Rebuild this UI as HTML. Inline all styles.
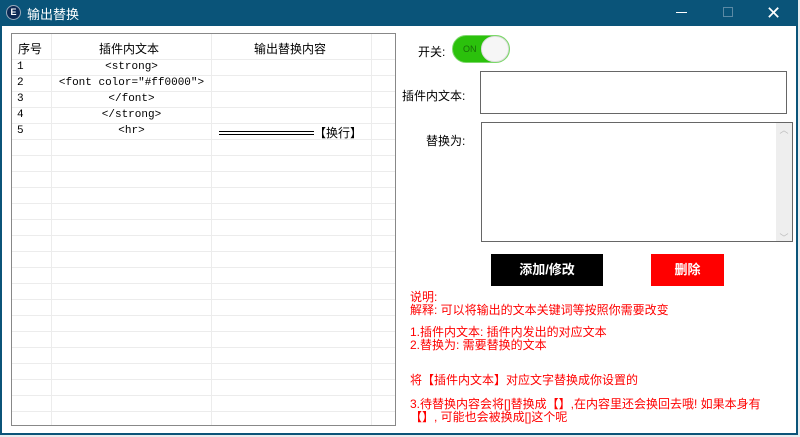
<!DOCTYPE html>
<html><head><meta charset="utf-8"><style>
*{margin:0;padding:0;box-sizing:border-box}
body{width:800px;height:437px;background:#e8ecef;position:relative;overflow:hidden;font-family:"Liberation Sans","Noto Sans CJK SC",sans-serif;font-size:12px}
.win{position:absolute;left:0;top:0;width:798px;height:435px;background:#fff}
.title{position:absolute;left:0;top:0;width:798px;height:26px;background:#0a5479;color:#fff}
.a{position:absolute;white-space:nowrap}
.tbl{position:absolute;left:11px;top:33px;width:385px;height:393px;border:1px solid #888;overflow:hidden}
.hl{position:absolute;left:0;width:383px;height:1px;background:#ececec}
.vl{position:absolute;top:0;width:1px;height:392px;background:#ececec}
.c{position:absolute;text-align:center;font-family:"Liberation Mono","Noto Sans CJK SC",monospace;font-size:11px}
.red{color:#f00;font-size:12px;line-height:13px}
</style></head><body>
<div class="win">
<div class="a" style="left:0;top:0;width:2px;height:435px;background:#0b5479"></div>
<div class="a" style="left:796px;top:0;width:2px;height:435px;background:#0b5479"></div>
<div class="a" style="left:0;top:433px;width:798px;height:2px;background:#0b5479"></div>
<div class="title">
<div class="a" style="left:6px;top:5px;width:15px;height:15px;border-radius:50%;background:#0c2a55;border:1px solid #9ab;color:#fff;font-size:9px;text-align:center;line-height:13px;font-weight:bold">E</div>
<div class="a" style="left:27px;top:4px;font-size:13px">输出替换</div>
<div class="a" style="left:676px;top:12px;width:11px;height:1px;background:#fff"></div>
<div class="a" style="left:723px;top:7px;width:10px;height:10px;border:1px solid #5b8aa5"></div>
<div class="a" style="left:766px;top:0px;font-size:18px;line-height:26px">✕</div>
</div>
<div class="tbl">
<div class="vl" style="left:39px"></div><div class="vl" style="left:199px"></div><div class="vl" style="left:359px"></div>
<div id="rows"></div>
<div class="a" style="left:6px;top:6px;font-size:12px">序号</div>
<div class="a" style="left:87px;top:6px;font-size:12px">插件内文本</div>
<div class="a" style="left:242px;top:6px;font-size:12px">输出替换内容</div>
<div class="c" style="left:5px;top:27px;text-align:left">1</div>
<div class="c" style="left:5px;top:43px;text-align:left">2</div>
<div class="c" style="left:5px;top:59px;text-align:left">3</div>
<div class="c" style="left:5px;top:75px;text-align:left">4</div>
<div class="c" style="left:5px;top:91px;text-align:left">5</div>
<div class="c" style="left:40px;width:159px;top:27px">&lt;strong&gt;</div>
<div class="c" style="left:40px;width:159px;top:43px">&lt;font color="#ff0000"&gt;</div>
<div class="c" style="left:40px;width:159px;top:59px">&lt;/font&gt;</div>
<div class="c" style="left:40px;width:159px;top:75px">&lt;/strong&gt;</div>
<div class="c" style="left:40px;width:159px;top:91px">&lt;hr&gt;</div>
<div class="a" style="left:207px;top:97px;width:95px;height:4px;border-top:1px solid #000;border-bottom:1px solid #000"></div>
<div class="a" style="left:302px;top:90px;font-size:12px">【换行】</div>
</div>
<div class="a" style="left:418px;top:43px;font-size:12px">开关:</div>
<div class="a" style="left:452px;top:35px;width:58px;height:28px;border-radius:14px;background:#2bc10c;border:1px solid #7cd86a"></div>
<div class="a" style="left:463px;top:44px;font-size:9px;color:#176d08">ON</div>
<div class="a" style="left:481px;top:36px;width:28px;height:26px;border-radius:13px;background:#f6f6f6;border:1px solid #ddd"></div>
<div class="a" style="left:402px;top:87px;font-size:12px">插件内文本:</div>
<div class="a" style="left:480px;top:71px;width:307px;height:43px;border:1px solid #666"></div>
<div class="a" style="left:426px;top:132px;font-size:12px">替换为:</div>
<div class="a" style="left:481px;top:122px;width:312px;height:120px;border:1px solid #666"></div>
<div class="a" style="left:776px;top:123px;width:16px;height:118px;background:#eee;color:#bbb;font-size:9px;text-align:center">︿<br><span style="position:relative;top:95px">﹀</span></div>
<div class="a" style="left:491px;top:254px;width:112px;height:32px;background:#000;color:#fff;font-weight:bold;font-size:13px;text-align:center;line-height:32px">添加/修改</div>
<div class="a" style="left:651px;top:254px;width:73px;height:32px;background:#f00;color:#fff;font-weight:bold;font-size:13px;text-align:center;line-height:32px">删除</div>
<div class="a red" style="left:410px;top:291px">说明:<br>解释: 可以将输出的文本关键词等按照你需要改变</div>
<div class="a red" style="left:410px;top:326px">1.插件内文本: 插件内发出的对应文本<br>2.替换为: 需要替换的文本</div>
<div class="a red" style="left:410px;top:374px">将【插件内文本】对应文字替换成你设置的</div>
<div class="a red" style="left:410px;top:398px">3.待替换内容会将[]替换成【】,在内容里还会换回去哦! 如果本身有<br>【】, 可能也会被换成[]这个呢</div>
</div>
<script>
var r=document.getElementById('rows'),h='';for(var y=25;y<392;y+=16)h+='<div class="hl" style="top:'+y+'px"></div>';r.innerHTML=h;
</script>
</body></html>
